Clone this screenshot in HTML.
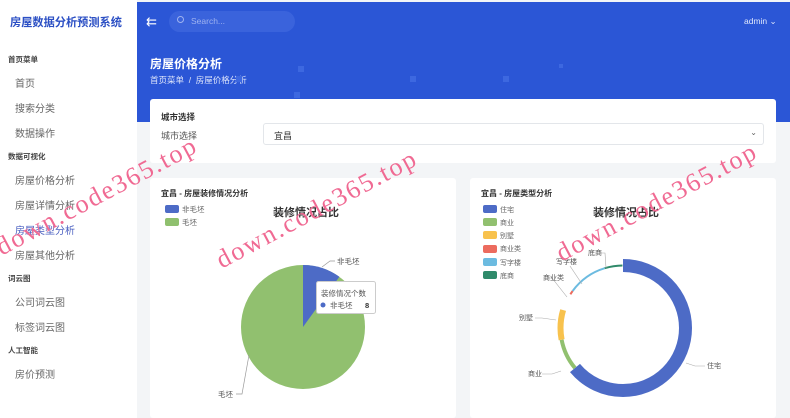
<!DOCTYPE html>
<html><head><meta charset="utf-8"><style>
*{margin:0;padding:0;box-sizing:border-box}
html,body{width:790px;height:418px;overflow:hidden}
body{background:#f3f5f7;font-family:"Liberation Sans","Noto Sans CJK SC",sans-serif;position:relative}
.side{position:absolute;left:0;top:0;width:137px;height:418px;background:#fff}
.logo{position:absolute;left:10px;top:14px;font-size:11.2px;font-weight:bold;color:#2b4fc4}
.sec{position:absolute;left:8px;font-size:7.5px;font-weight:bold;color:#444}
.it{position:absolute;left:15px;font-size:10px;color:#666}
.top{position:absolute;left:137px;top:2px;width:653px;height:120px;background:#2b56d6}
.dot{position:absolute;background:#3d68e0;width:6px;height:6px}
.card{position:absolute;background:#fff;border-radius:3px}
.t{font-size:12px;font-weight:bold;color:#fff}
.wm{position:absolute;color:#f06a93;font-family:"Liberation Serif",serif;font-size:26px;transform:rotate(-28deg);transform-origin:left bottom;white-space:nowrap;letter-spacing:2px}
</style></head><body>
<div class="side">
<div class="logo">房屋数据分析预测系统</div>
<div class="sec" style="top:54px">首页菜单</div>
<div class="it" style="top:75px">首页</div>
<div class="it" style="top:100px">搜索分类</div>
<div class="it" style="top:125px">数据操作</div>
<div class="sec" style="top:151px">数据可视化</div>
<div class="it" style="top:172px">房屋价格分析</div>
<div class="it" style="top:197px">房屋详情分析</div>
<div class="it" style="top:222px;color:#4a5fc0">房屋类型分析</div>
<div class="it" style="top:247px">房屋其他分析</div>
<div class="sec" style="top:273px">词云图</div>
<div class="it" style="top:294px">公司词云图</div>
<div class="it" style="top:319px">标签词云图</div>
<div class="sec" style="top:345px">人工智能</div>
<div class="it" style="top:366px">房价预测</div>
</div>
<div class="top">
<div style="position:absolute;left:9px;top:12px;color:#fff;font-size:13px">⇇</div>
<div style="position:absolute;left:32px;top:9px;width:126px;height:21px;border-radius:11px;background:#3a63dc;color:#9fb3f0;font-size:8.5px;padding:5px 0 0 22px">Search...</div>
<div style="position:absolute;left:40px;top:14px;width:7px;height:7px;border:1.5px solid #9fb3f0;border-radius:50%"></div>
<div style="position:absolute;left:607px;top:14px;color:#dfe6fb;font-size:8.5px">admin ⌄</div>
<div class="t" style="position:absolute;left:13px;top:53px">房屋价格分析</div>
<div style="position:absolute;left:13px;top:72px;font-size:8.5px;color:#dfe6fb">首页菜单 &nbsp;/ &nbsp;房屋价格分析</div>
<div class="dot" style="left:161px;top:64px"></div><div class="dot" style="left:157px;top:90px"></div>
<div class="dot" style="left:99px;top:74px"></div><div class="dot" style="left:273px;top:74px"></div><div class="dot" style="left:366px;top:74px"></div><div class="dot" style="left:422px;top:62px;width:4px;height:4px"></div>
</div>
<div class="card" style="left:150px;top:99px;width:626px;height:64px">
<div style="position:absolute;left:11px;top:12px;font-size:8.5px;font-weight:bold;color:#333">城市选择</div>
<div style="position:absolute;left:11px;top:30px;font-size:9px;color:#555">城市选择</div>
<div style="position:absolute;left:113px;top:24px;width:501px;height:22px;border:1px solid #e3e6ea;border-radius:3px;font-size:9px;color:#333;padding:5px 0 0 10px">宜昌<span style="position:absolute;right:6px;top:4px;color:#666;font-size:8px">⌄</span></div>
</div>
<div class="card" style="left:150px;top:178px;width:306px;height:240px">
<div style="position:absolute;left:11px;top:10px;font-size:8px;font-weight:bold;color:#333">宜昌 - 房屋装修情况分析</div>
<div style="position:absolute;left:15px;top:27px;width:14px;height:8px;background:#4d6bc6;border-radius:2px"></div><div style="position:absolute;left:32px;top:26px;font-size:7.5px;color:#666">非毛坯</div>
<div style="position:absolute;left:15px;top:40px;width:14px;height:8px;background:#8fc06e;border-radius:2px"></div><div style="position:absolute;left:32px;top:39px;font-size:7.5px;color:#666">毛坯</div>
<div style="position:absolute;left:123px;top:26px;font-size:11px;font-weight:bold;color:#333">装修情况占比</div>
</div>
<svg style="position:absolute;left:150px;top:178px" width="306" height="240">
<circle cx="153" cy="149" r="62" fill="#91c06f"/>
<path d="M153 149 L153 87 A62 62 0 0 1 189.4 98.8 Z" fill="#4d6bc6"/>
<path d="M172 89 L180 83 L185 83" stroke="#999" fill="none" stroke-width=".7"/>
<text x="187" y="86" font-size="7.5" fill="#555">非毛坯</text>
<path d="M99 177 L92 216 L86 216" stroke="#999" fill="none" stroke-width=".7"/>
<text x="68" y="219" font-size="7.5" fill="#555">毛坯</text>
<rect x="166.5" y="103.5" width="59" height="32" rx="2" fill="#fff" stroke="#ccc"/>
<text x="171" y="118" font-size="7.5" fill="#555">装修情况个数</text>
<circle cx="173" cy="127" r="2.5" fill="#4d6bc6"/>
<text x="180" y="130" font-size="7.5" fill="#555">非毛坯</text>
<text x="215" y="130" font-size="7.5" font-weight="bold" fill="#333">8</text>
</svg>
<div class="card" style="left:470px;top:178px;width:306px;height:240px">
<div style="position:absolute;left:11px;top:10px;font-size:8px;font-weight:bold;color:#333">宜昌 - 房屋类型分析</div>
<div style="position:absolute;left:123px;top:26px;font-size:11px;font-weight:bold;color:#333">装修情况占比</div>
</div>
<svg style="position:absolute;left:470px;top:178px" width="306" height="240">
<g font-size="7" fill="#666">
<rect x="13" y="27" width="14" height="8" rx="2" fill="#4d6bc6"/><text x="30" y="34">住宅</text>
<rect x="13" y="40" width="14" height="8" rx="2" fill="#91c06f"/><text x="30" y="47">商业</text>
<rect x="13" y="53" width="14" height="8" rx="2" fill="#f8c24d"/><text x="30" y="60">别墅</text>
<rect x="13" y="67" width="14" height="8" rx="2" fill="#ec6b5e"/><text x="30" y="73">商业类</text>
<rect x="13" y="80" width="14" height="8" rx="2" fill="#6cbbe0"/><text x="30" y="87">写字楼</text>
<rect x="13" y="93" width="14" height="8" rx="2" fill="#2f8a6a"/><text x="30" y="100">底商</text>
</g>
<g transform="rotate(-90 153 150)" fill="none" stroke-width="13">
<circle cx="153" cy="150" r="62.5" stroke="#4d6bc6" stroke-dasharray="251 1000"/>
<circle cx="153" cy="150" r="62.5" stroke="#91c06f" stroke-dasharray="0 251 31.6 1000" stroke-width="4"/>
<circle cx="153" cy="150" r="62.5" stroke="#f8c24d" stroke-dasharray="0 282.6 30 1000" stroke-width="6"/>
<circle cx="153" cy="150" r="62.5" stroke="#ec6b5e" stroke-dasharray="0 330 4 1000" stroke-width="2"/>
<circle cx="153" cy="150" r="62.5" stroke="#6cbbe0" stroke-dasharray="0 334 40 1000" stroke-width="2"/>
<circle cx="153" cy="150" r="62.5" stroke="#2f8a6a" stroke-dasharray="0 374 18 1000" stroke-width="2"/>
</g>
<g stroke="#aaa" stroke-width=".6" fill="none">
<path d="M216 185 L225 188 L235 188"/><path d="M91 193 L82 196 L72 196"/><path d="M86 142 L72 140 L65 140"/><path d="M97 119 L82 100 L76 100"/><path d="M112 106 L100 88"/><path d="M136 90 L135 75 L128 75"/>
</g>
<g font-size="7" fill="#555"><text x="237" y="190">住宅</text><text x="58" y="198">商业</text><text x="49" y="142">别墅</text><text x="73" y="102">商业类</text><text x="86" y="86">写字楼</text><text x="118" y="77">底商</text></g>
<text x="193" y="412" font-size="11" fill="#aaa">CSDN @码界筑梦坊</text>
</svg>
<div class="wm" style="left:5px;top:232px">down.code365.top</div>
<div class="wm" style="left:225px;top:245px">down.code365.top</div>
<div class="wm" style="left:565px;top:238px">down.code365.top</div>
</body></html>
